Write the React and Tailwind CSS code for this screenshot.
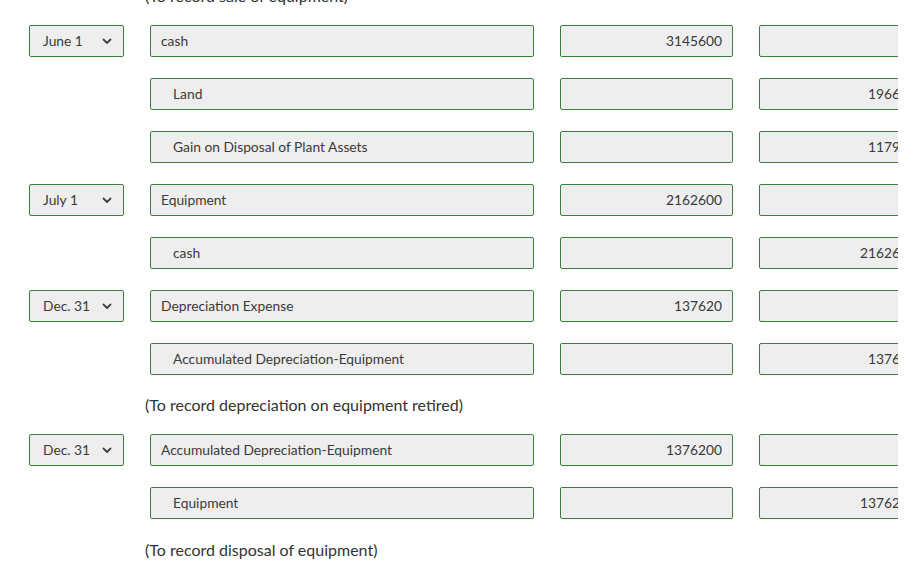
import React from "react";

const Chev = () => (
  <svg width="10" height="7" viewBox="0 0 10 7" className="shrink-0">
    <path d="M1.5 1.5 L5 5 L8.5 1.5" fill="none" stroke="#444" strokeWidth="1.8" strokeLinecap="round" strokeLinejoin="round" />
  </svg>
);

const box = "h-[32px] border border-[#3d7f3d] bg-[#eeeeee] rounded-[2px] flex items-center shrink-0";

function Row({ date, account, indent, debit, credit }) {
  return (
    <div className="flex items-center h-[32px]">
      <div className="w-[29px] shrink-0" />
      {date ? (
        <div className={box + " w-[95px] pl-[13px] pr-[11px] justify-between"}>
          <span>{date}</span>
          <Chev />
        </div>
      ) : (
        <div className="w-[95px] shrink-0" />
      )}
      <div className="w-[26px] shrink-0" />
      <div className={box + " w-[384px] " + (indent ? "pl-[22px]" : "pl-[10px]")}>{account}</div>
      <div className="w-[26px] shrink-0" />
      <div className={box + " w-[173px] justify-end pr-[10px]"}>{debit}</div>
      <div className="w-[26px] shrink-0" />
      <div className={box + " w-[168px] justify-end pr-[10px]"}>{credit}</div>
    </div>
  );
}

export default function App() {
  return (
    <div className="w-[916px] h-[569px] bg-white overflow-hidden text-[13.8px] text-[#3a3a3a]" style={{ fontFamily: "Lato, 'Open Sans', sans-serif" }}>
      <div className="w-[898px] overflow-hidden">
        <div className="h-[25px] relative">
          <div className="absolute left-[145px] top-[-16px] text-[16px] text-[#333]">(To record sale of equipment)</div>
        </div>
        <div className="flex flex-col gap-[21px] w-[1000px]">
          <Row date="June 1" account="cash" debit="3145600" />
          <Row account="Land" indent credit="196600" />
          <Row account="Gain on Disposal of Plant Assets" indent credit="117900" />
          <Row date="July 1" account="Equipment" debit="2162600" />
          <Row account="cash" indent credit="2162600" />
          <Row date="Dec. 31" account="Depreciation Expense" debit="137620" />
          <Row account="Accumulated Depreciation-Equipment" indent credit="137620" />
        </div>
        <div className="h-[59px] flex items-center pl-[145px] text-[16px] text-[#333]">(To record depreciation on equipment retired)</div>
        <div className="flex flex-col gap-[21px] w-[1000px]">
          <Row date="Dec. 31" account="Accumulated Depreciation-Equipment" debit="1376200" />
          <Row account="Equipment" indent credit="1376200" />
        </div>
        <div className="h-[61px] flex items-center pl-[145px] text-[16px] text-[#333]">(To record disposal of equipment)</div>
      </div>
    </div>
  );
}
